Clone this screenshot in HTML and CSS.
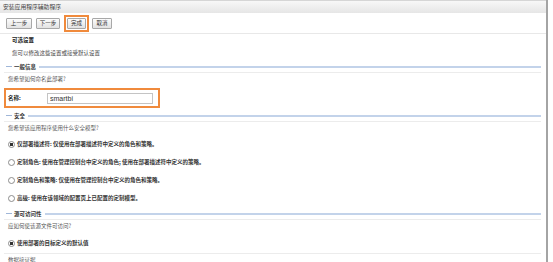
FILE: index.html
```html
<!DOCTYPE html>
<html lang="zh-CN">
<head>
  <meta charset="UTF-8" />
  <title>安装应用程序辅助程序</title>
  <link rel="stylesheet" href="styles.css">
</head>
<body>
  <div class="window">
    <div class="titlebar">安装应用程序辅助程序</div>

    <div class="toolbar">
      <button type="button" class="btn btn-prev">上一步</button>
      <button type="button" class="btn btn-next">下一步</button>
      <span class="highlight"><button type="button" class="btn btn-finish">完成</button></span>
      <button type="button" class="btn btn-cancel">取消</button>
    </div>

    <div class="content">
      <div class="section-title">可选设置</div>
      <div class="section-desc">您可以修改这些设置或接受默认设置</div>

      <div class="legend"><span>一般信息</span></div>
      <div class="question">您希望如何命名此部署?</div>
      <div class="name-box">
        <label for="name">名称:</label>
        <input type="text" id="name" value="smartbi" />
      </div>

      <div class="legend"><span>安全</span></div>
      <div class="question">您希望该应用程序使用什么安全模型?</div>
      <label class="radio-row"><input type="radio" name="security" checked /> 仅部署描述符: 仅使用在部署描述符中定义的角色和策略。</label>
      <label class="radio-row"><input type="radio" name="security" /> 定制角色: 使用在管理控制台中定义的角色; 使用在部署描述符中定义的策略。</label>
      <label class="radio-row"><input type="radio" name="security" /> 定制角色和策略: 仅使用在管理控制台中定义的角色和策略。</label>
      <label class="radio-row"><input type="radio" name="security" /> 高级: 使用在该领域的配置页上已配置的定制模型。</label>

      <div class="legend legend-source"><span>源可访问性</span></div>
      <div class="question">应如何使该源文件可访问?</div>
      <label class="radio-row radio-last"><input type="radio" name="source" checked /> 使用部署的目标定义的默认值</label>

      <div class="question">数据接证据</div>
    </div>
  </div>
</body>
</html>
```

FILE: styles.css
```css
body {
  margin: 0;
  background: #fff;
  font-family: "Noto Sans CJK SC", "Liberation Sans", sans-serif;
  font-size: 5.5px;
  color: #333;
}

.window {
  width: 546px;
  height: 262px;
  overflow: hidden;
  border-right: 2px solid #a4a4a4;
}

.titlebar {
  height: 12px;
  line-height: 12px;
  padding-left: 3px;
  font-size: 5.8px;
  color: #444;
  border-top: 1px solid #d6d6d6;
  background: linear-gradient(#f8f8f8, #e6e6e6);
}

.toolbar {
  display: flex;
  align-items: center;
  gap: 4px;
  height: 20px;
  padding-left: 6px;
  border-bottom: 1px solid #e8e8e8;
}

.btn {
  height: 11px;
  padding: 0;
  font-family: inherit;
  font-size: 5.5px;
  color: #333;
  border: 1px solid #a8a8a8;
  border-radius: 1px;
  background: linear-gradient(#fcfcfc, #e2e2e2);
}

.btn-prev { width: 26px; }
.btn-next { width: 24px; }
.btn-finish { width: 19px; }
.btn-cancel { width: 20px; margin-left: -1px; }

.highlight {
  display: flex;
  padding: 1px;
  border: 2px solid #f08a3c;
}

/* Content */
.content {
  padding: 0 5px 0 4px;
}

.section-title {
  height: 13px;
  line-height: 13px;
  padding-left: 8px;
  font-weight: bold;
  color: #222;
}

.section-desc {
  height: 12px;
  line-height: 12px;
  padding-left: 8px;
  color: #444;
}

.legend {
  display: flex;
  align-items: center;
  gap: 2px;
  height: 11px;
  margin-top: 2px;
  padding-left: 2px;
  border-bottom: 1px solid #ececec;
  font-weight: bold;
  color: #333;
}

.legend::before {
  content: "";
  width: 6px;
  height: 1px;
  background: #9fb6d8;
}

.legend::after {
  content: "";
  flex: 1;
  height: 2px;
  margin-left: 1px;
  background: #c3d3ea;
}

.legend-source {
  margin-top: 1px;
}

.question {
  height: 13px;
  line-height: 13px;
  padding-left: 4px;
  color: #555;
}

.name-box {
  display: flex;
  align-items: center;
  width: 150px;
  height: 16px;
  margin-top: 2px;
  padding-left: 2px;
  border: 2px solid #f08a3c;
}

.name-box label {
  width: 39px;
  font-weight: bold;
  color: #222;
}

.name-box input {
  width: 106px;
  height: 11px;
  padding: 0 2px;
  box-sizing: border-box;
  font-family: "Liberation Sans", sans-serif;
  font-size: 7px;
  color: #333;
  border: 1px solid #c4c4c4;
  outline: none;
}

.radio-row {
  display: flex;
  align-items: center;
  gap: 2px;
  height: 18px;
  padding-left: 4px;
  font-weight: bold;
  color: #333;
}

.radio-row input {
  appearance: none;
  width: 7px;
  height: 7px;
  margin: 0;
  border: 1px solid #8c8c8c;
  border-radius: 50%;
  background: #fff;
}

.radio-row input:checked {
  background: radial-gradient(circle, #333 0 1.6px, #fff 2px);
}

.radio-last {
  height: 20px;
  border-bottom: 1px solid #ececec;
}
```
